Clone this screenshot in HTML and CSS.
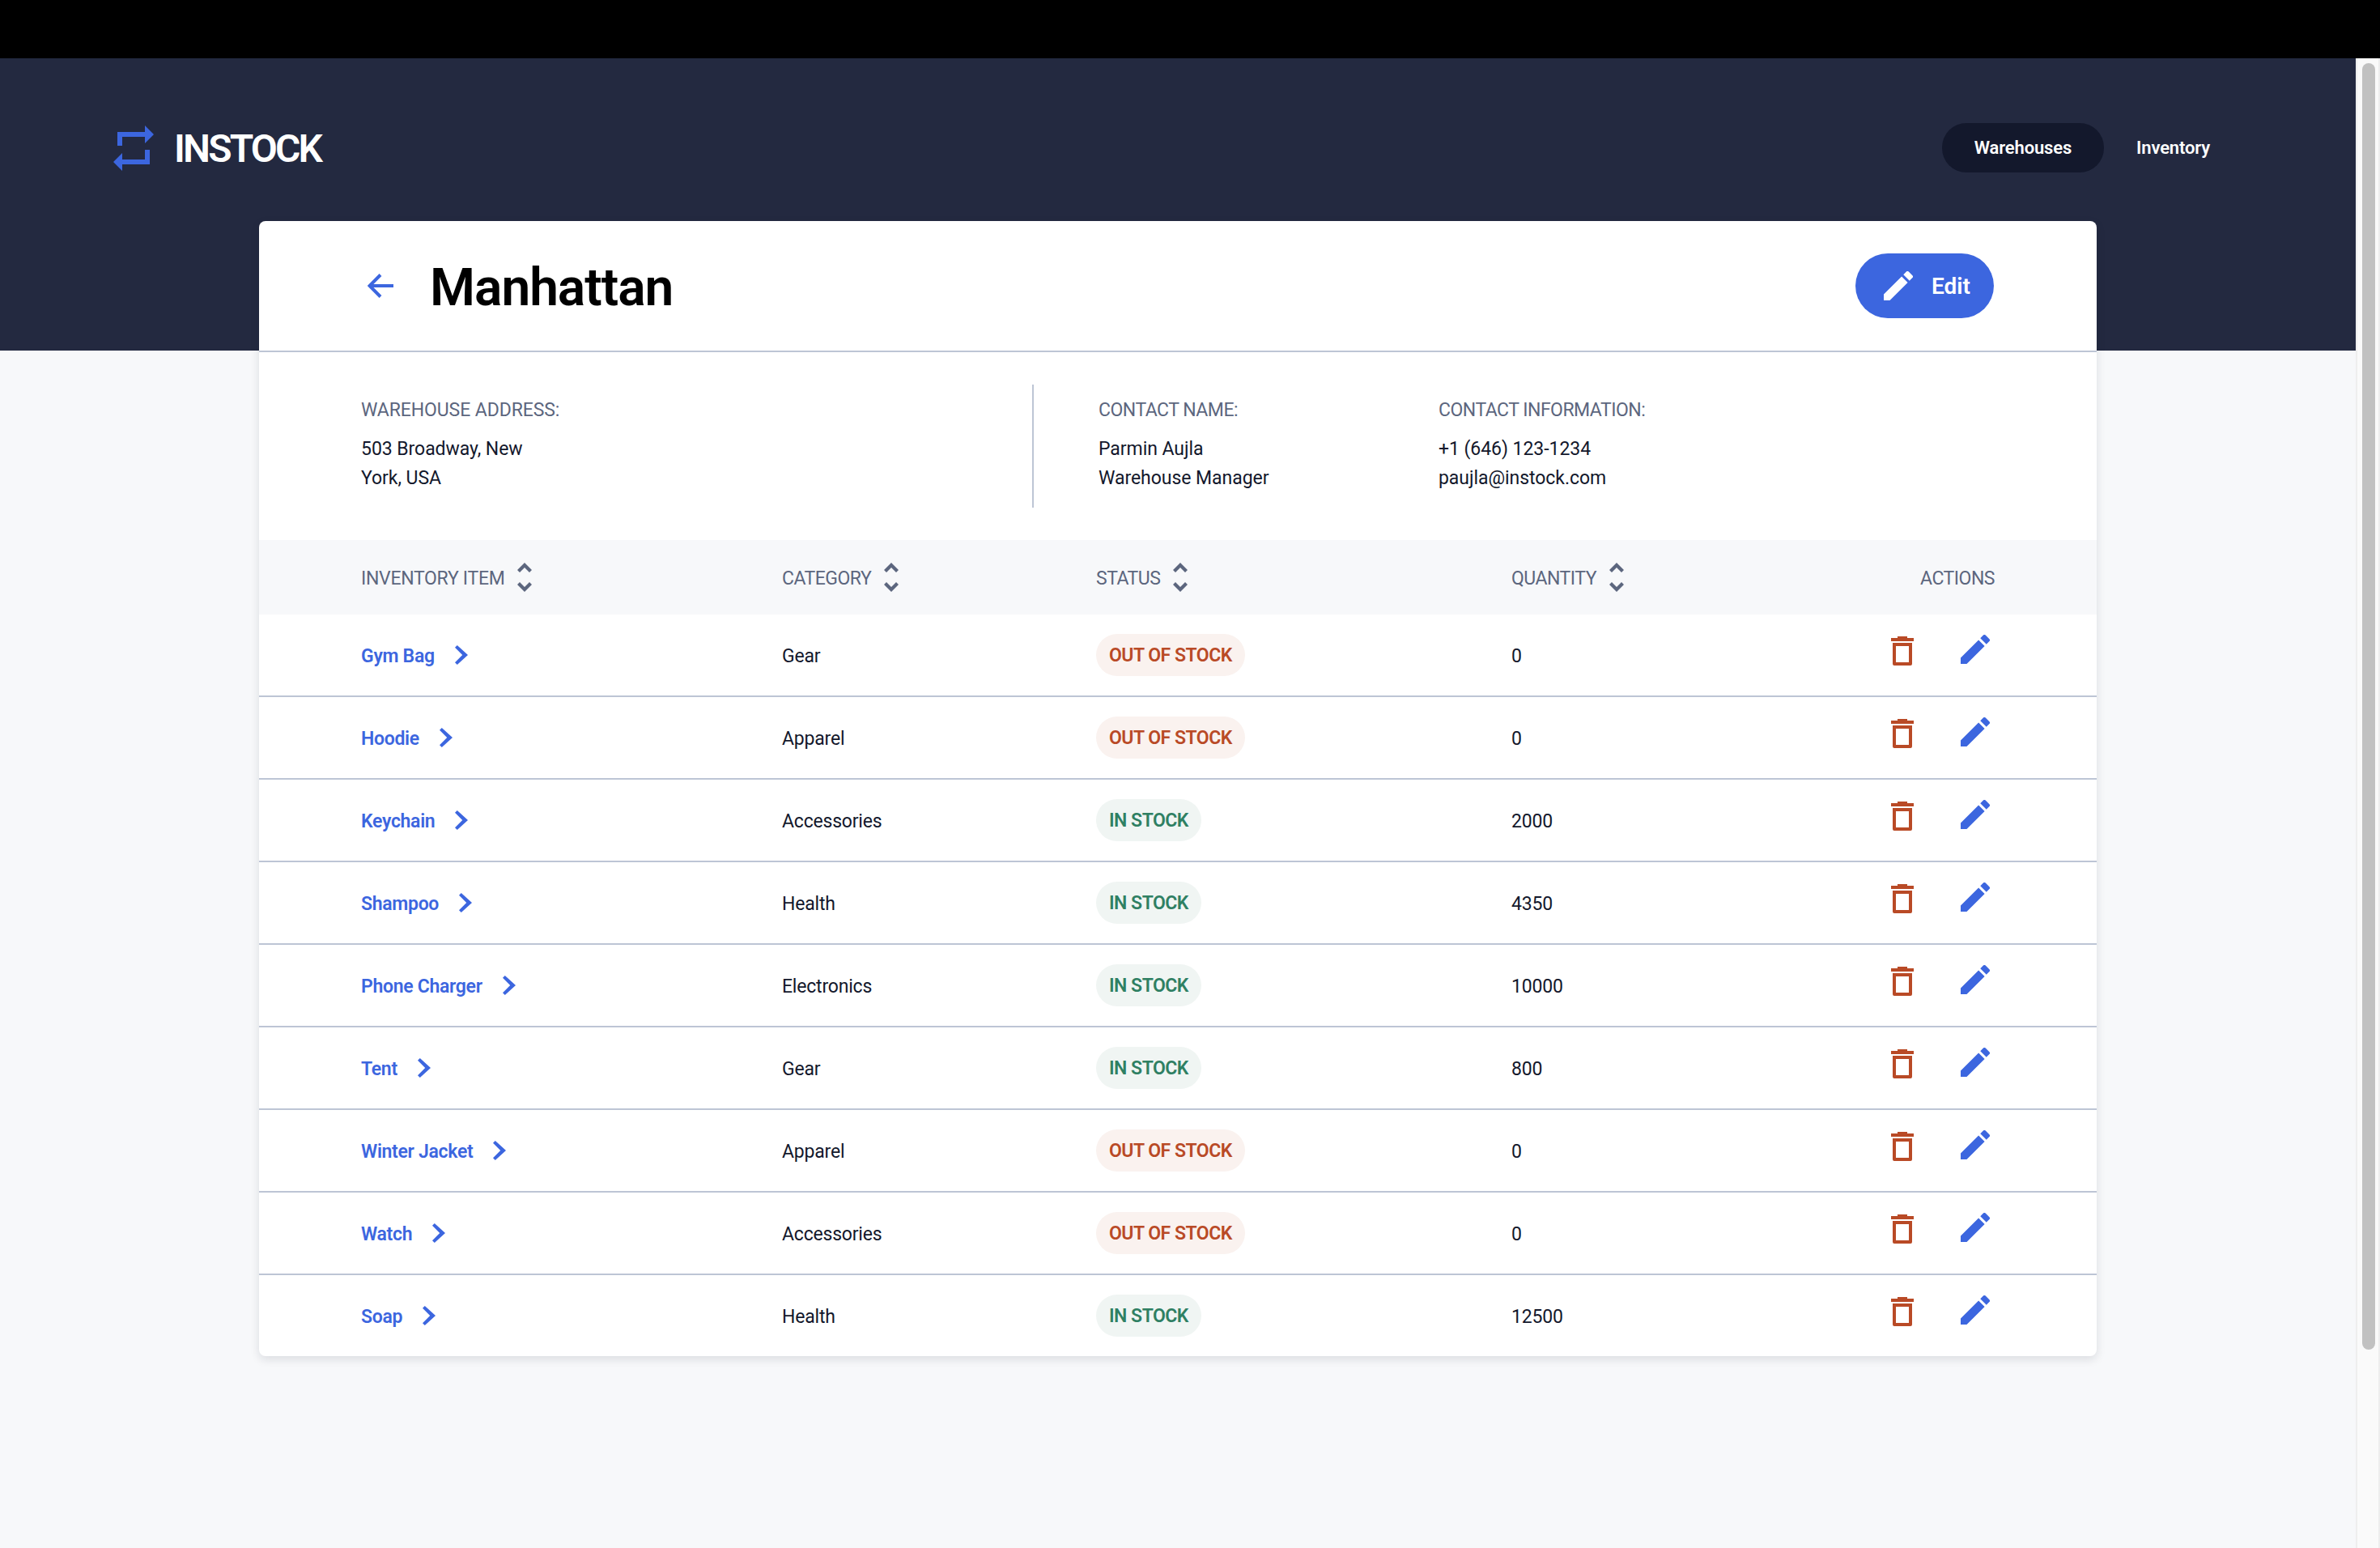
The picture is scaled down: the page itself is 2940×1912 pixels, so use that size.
FILE: index.html
```html
<!DOCTYPE html>
<html lang="en">
<head>
  <meta charset="UTF-8" />
  <meta name="viewport" content="width=device-width, initial-scale=1.0"/>
  <title>InStock - Manhattan</title>
  <link rel="stylesheet" href="styles.css">
</head>
<body>
  <svg class="icon-defs" width="0" height="0">
    <defs>
      <symbol id="i-edit" viewBox="3 3 18 18"><path d="M3 17.25V21h3.75L17.81 9.94l-3.75-3.75L3 17.25zM20.71 7.04a1 1 0 0 0 0-1.41l-2.34-2.34a1 1 0 0 0-1.41 0l-1.83 1.83 3.75 3.75 1.83-1.83z"/></symbol>
      <symbol id="i-trash" viewBox="0 0 28 36"><path fill-rule="evenodd" d="M0 2h8V0h12v2h8v4H0zM2 8h24v26a2 2 0 0 1-2 2H4a2 2 0 0 1-2-2zM6 12v20h16V12z"/></symbol>
      <symbol id="i-chevron" viewBox="0 0 16 24"><path d="M2.800 0L0 2.800 9.200 12 0 21.200 2.800 24 16 12z"/></symbol>
      <symbol id="i-sort" viewBox="0 0 18 36"><path d="M9 0l9 9-3 3-6-6-6 6-3-3zM9 36l-9-9 3-3 6 6 6-6 3 3z"/></symbol>
    </defs>
  </svg>

  <div class="top-strip"></div>

  <header class="site-header">
    <a class="logo" href="#">
      <svg class="logo-mark" viewBox="0 0 50 56"><path d="M5 8h34V0l11 11-11 11v-8H11v11H5zM45 30v18H11v8L0 45l11-11v8h28V30z"/></svg>
      <span class="logo-text">INSTOCK</span>
    </a>
    <nav class="nav">
      <a class="nav-link nav-link-active" href="#">Warehouses</a>
      <a class="nav-link" href="#">Inventory</a>
    </nav>
  </header>

  <main class="card">
    <div class="title-row">
      <svg class="back" viewBox="0 0 32 32"><path d="M32 16H3M16 2.500L2.500 16 16 29.500"/></svg>
      <h1 class="title">Manhattan</h1>
      <button class="btn-edit"><svg class="btn-edit-icon"><use href="#i-edit"/></svg>Edit</button>
    </div>

    <section class="info">
      <div class="info-address">
        <h4 class="label">WAREHOUSE ADDRESS:</h4>
        <p class="value">503 Broadway, New<br>York, USA</p>
      </div>
      <div class="info-contacts">
        <div class="info-name">
          <h4 class="label">CONTACT NAME:</h4>
          <p class="value">Parmin Aujla<br>Warehouse Manager</p>
        </div>
        <div>
          <h4 class="label">CONTACT INFORMATION:</h4>
          <p class="value">+1 (646) 123-1234<br>paujla@instock.com</p>
        </div>
      </div>
    </section>

    <div class="row row-head">
      <div class="col-item label">INVENTORY ITEM <svg class="sort"><use href="#i-sort"/></svg></div>
      <div class="col-cat label">CATEGORY <svg class="sort"><use href="#i-sort"/></svg></div>
      <div class="col-status label">STATUS <svg class="sort"><use href="#i-sort"/></svg></div>
      <div class="col-qty label">QUANTITY <svg class="sort"><use href="#i-sort"/></svg></div>
      <div class="col-actions label">ACTIONS</div>
    </div>

    <div class="row">
      <div class="col-item"><a class="item-link" href="#">Gym Bag<svg class="chevron"><use href="#i-chevron"/></svg></a></div>
      <div class="col-cat">Gear</div>
      <div class="col-status"><span class="pill pill-out">OUT OF STOCK</span></div>
      <div class="col-qty">0</div>
      <div class="col-actions"><svg class="trash"><use href="#i-trash"/></svg><svg class="pencil"><use href="#i-edit"/></svg></div>
    </div>
    <div class="row">
      <div class="col-item"><a class="item-link" href="#">Hoodie<svg class="chevron"><use href="#i-chevron"/></svg></a></div>
      <div class="col-cat">Apparel</div>
      <div class="col-status"><span class="pill pill-out">OUT OF STOCK</span></div>
      <div class="col-qty">0</div>
      <div class="col-actions"><svg class="trash"><use href="#i-trash"/></svg><svg class="pencil"><use href="#i-edit"/></svg></div>
    </div>
    <div class="row">
      <div class="col-item"><a class="item-link" href="#">Keychain<svg class="chevron"><use href="#i-chevron"/></svg></a></div>
      <div class="col-cat">Accessories</div>
      <div class="col-status"><span class="pill pill-in">IN STOCK</span></div>
      <div class="col-qty">2000</div>
      <div class="col-actions"><svg class="trash"><use href="#i-trash"/></svg><svg class="pencil"><use href="#i-edit"/></svg></div>
    </div>
    <div class="row">
      <div class="col-item"><a class="item-link" href="#">Shampoo<svg class="chevron"><use href="#i-chevron"/></svg></a></div>
      <div class="col-cat">Health</div>
      <div class="col-status"><span class="pill pill-in">IN STOCK</span></div>
      <div class="col-qty">4350</div>
      <div class="col-actions"><svg class="trash"><use href="#i-trash"/></svg><svg class="pencil"><use href="#i-edit"/></svg></div>
    </div>
    <div class="row">
      <div class="col-item"><a class="item-link" href="#">Phone Charger<svg class="chevron"><use href="#i-chevron"/></svg></a></div>
      <div class="col-cat">Electronics</div>
      <div class="col-status"><span class="pill pill-in">IN STOCK</span></div>
      <div class="col-qty">10000</div>
      <div class="col-actions"><svg class="trash"><use href="#i-trash"/></svg><svg class="pencil"><use href="#i-edit"/></svg></div>
    </div>
    <div class="row">
      <div class="col-item"><a class="item-link" href="#">Tent<svg class="chevron"><use href="#i-chevron"/></svg></a></div>
      <div class="col-cat">Gear</div>
      <div class="col-status"><span class="pill pill-in">IN STOCK</span></div>
      <div class="col-qty">800</div>
      <div class="col-actions"><svg class="trash"><use href="#i-trash"/></svg><svg class="pencil"><use href="#i-edit"/></svg></div>
    </div>
    <div class="row">
      <div class="col-item"><a class="item-link" href="#">Winter Jacket<svg class="chevron"><use href="#i-chevron"/></svg></a></div>
      <div class="col-cat">Apparel</div>
      <div class="col-status"><span class="pill pill-out">OUT OF STOCK</span></div>
      <div class="col-qty">0</div>
      <div class="col-actions"><svg class="trash"><use href="#i-trash"/></svg><svg class="pencil"><use href="#i-edit"/></svg></div>
    </div>
    <div class="row">
      <div class="col-item"><a class="item-link" href="#">Watch<svg class="chevron"><use href="#i-chevron"/></svg></a></div>
      <div class="col-cat">Accessories</div>
      <div class="col-status"><span class="pill pill-out">OUT OF STOCK</span></div>
      <div class="col-qty">0</div>
      <div class="col-actions"><svg class="trash"><use href="#i-trash"/></svg><svg class="pencil"><use href="#i-edit"/></svg></div>
    </div>
    <div class="row row-last">
      <div class="col-item"><a class="item-link" href="#">Soap<svg class="chevron"><use href="#i-chevron"/></svg></a></div>
      <div class="col-cat">Health</div>
      <div class="col-status"><span class="pill pill-in">IN STOCK</span></div>
      <div class="col-qty">12500</div>
      <div class="col-actions"><svg class="trash"><use href="#i-trash"/></svg><svg class="pencil"><use href="#i-edit"/></svg></div>
    </div>
  </main>

  <div class="scrollbar"><div class="scrollbar-thumb"></div></div>
</body>
</html>
```

FILE: styles.css
```css
* { box-sizing: border-box; }
html, body {
  margin: 0;
  height: 1912px;
  overflow: hidden;
}
body {
  font-family: Roboto, "Open Sans", sans-serif;
  font-size: 24px;
  color: #13182c;
  background-color: #f7f8fa;
  position: relative;
}
a { text-decoration: none; color: inherit; }
h1, h4, p { margin: 0; }
.icon-defs { position: absolute; }

.top-strip { height: 72px; background-color: #000; }

.site-header {
  height: 361px;
  margin-right: 30px;
  background-color: #232940;
  padding: 82px 180px 0 140px;
  display: flex;
  justify-content: space-between;
  align-items: flex-start;
}
.logo { display: flex; align-items: center; gap: 25px; color: #fff; }
.logo-mark { width: 50px; height: 56px; fill: #3c66df; }
.logo-text { font-size: 48px; font-weight: 600; letter-spacing: -2.8px; margin-top: 1px; }

.nav { display: flex; gap: 40px; align-items: center; margin-top: -2px; }
.nav-link {
  color: #fff;
  font-size: 22px;
  font-weight: 600;
  letter-spacing: -0.15px;
  height: 61px;
  line-height: 61px;
}
.nav-link-active {
  background-color: #13182c;
  border-radius: 30px;
  padding: 0 40px;
}

.card {
  width: 2270px;
  margin: -160px 0 0 320px;
  position: relative;
  background-color: #fff;
  border-radius: 8px;
  box-shadow: 0 4px 12px rgba(19, 24, 44, 0.12);
}

.title-row {
  height: 162px;
  border-bottom: 2px solid #bdc5d5;
  padding: 0 127px 0 134px;
  display: flex;
  align-items: center;
}
.back { width: 32px; height: 32px; fill: none; stroke: #3c66df; stroke-width: 4; }
.title { font-size: 64px; font-weight: 600; color: #000; margin: 4px 0 0 45px; letter-spacing: -1px; }
.btn-edit {
  margin-left: auto;
  width: 171px;
  height: 80px;
  padding: 0 0 0 35px;
  border: none;
  border-radius: 40px;
  background-color: #3c66df;
  color: #fff;
  font: 600 28px Roboto, sans-serif;
  display: flex;
  align-items: center;
  gap: 23px;
}
.btn-edit-icon { width: 36px; height: 36px; fill: #fff; }

.info {
  height: 232px;
  padding: 40px 126px 0;
  display: flex;
}
.info-address { width: 831px; height: 152px; padding-top: 18px; border-right: 2px solid #bdc5d5; }
.info-contacts { display: flex; padding: 18px 0 0 80px; }
.info-contacts .label { letter-spacing: -0.5px; }
.info-name { width: 420px; }
.label { font-size: 23px; font-weight: 400; color: #5c667e; letter-spacing: -0.1px; }
.value { font-size: 23px; line-height: 36px; margin-top: 17px; letter-spacing: -0.05px; }

.row {
  height: 102px;
  padding: 0 126px;
  border-bottom: 2px solid #bdc5d5;
  display: flex;
  align-items: center;
  font-size: 23px;
  letter-spacing: -0.2px;
}
.row-last { height: 100px; border-bottom: none; }
.row-head { height: 92px; border-bottom: none; background-color: #f7f8fa; }

.col-item { width: 520px; display: flex; align-items: center; padding-top: 2px; }
.col-cat { width: 388px; display: flex; align-items: center; padding-top: 2px; }
.col-status { width: 513px; display: flex; align-items: center; }
.col-qty { width: 290px; display: flex; align-items: center; padding-top: 2px; }
.col-actions { margin-left: auto; display: flex; align-items: center; }
.row-head .label { letter-spacing: -0.5px; padding-top: 2px; }
.row-head .col-item { letter-spacing: -0.3px; }

.sort { width: 18px; height: 36px; margin-left: 16px; margin-top: -2px; fill: #5c667e; }

.item-link { display: flex; align-items: center; color: #3c66df; font-weight: 600; letter-spacing: -0.3px; }
.chevron { width: 16px; height: 24px; margin-left: 25px; margin-top: -2px; fill: #3c66df; }

.pill {
  height: 52px;
  line-height: 54px;
  padding: 0 16px;
  border-radius: 26px;
  font-weight: 600;
  letter-spacing: -0.5px;
}
.pill-out { color: #b94a26; background-color: #faf2ef; }
.pill-in { color: #2f8063; background-color: #f0f5f3; }

.trash { width: 28px; height: 36px; margin-top: -10px; fill: #b94a26; }
.pencil { width: 36px; height: 36px; margin: -14px 6px 0 58px; fill: #3c66df; }

.scrollbar {
  position: absolute;
  top: 72px;
  right: 0;
  bottom: 0;
  width: 30px;
  background-color: #fafafa;
  border-left: 2px solid #eeeeee;
  border-right: 2px solid #eeeeee;
  padding: 6px 4px 0 6px;
}
.scrollbar-thumb { height: 1589px; background-color: #c1c1c1; border-radius: 8px; }
```
